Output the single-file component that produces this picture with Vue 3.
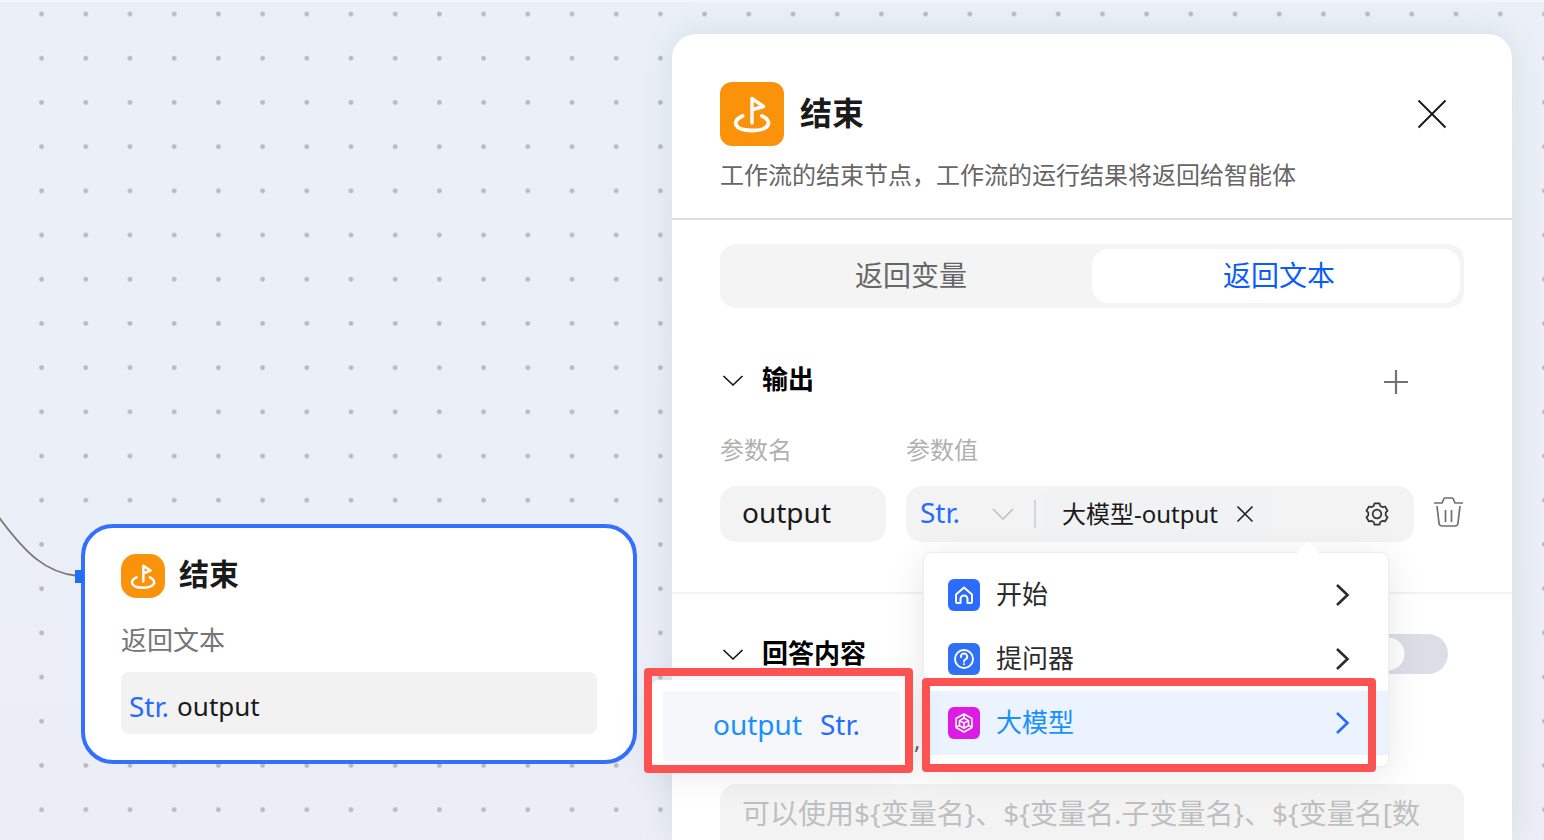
<script setup>
    import { ref } from 'vue'

    const activeTab = ref('text')
    const paramName = ref('output')
    const answer = ref('')
    const stream = ref(false)

    const tabs = [
        { key: 'variable', label: '返回变量' },
        { key: 'text', label: '返回文本' }
    ]

    const sources = [
        { key: 'start', label: '开始' },
        { key: 'question', label: '提问器' },
        { key: 'llm', label: '大模型' }
    ]
    const activeSource = ref('llm')

    // Outline of a gear with six teeth around 0,0
    function gearPath() {
        const points = []
        const profile = [[-30, 8.6], [-20, 9], [-13, 11], [13, 11], [20, 9]]
        for (let tooth = 0; tooth < 6; tooth++) {
            profile.forEach(([offset, radius]) => {
                const angle = (tooth * 60 - 90 + offset) * Math.PI / 180
                points.push(`${(radius * Math.cos(angle)).toFixed(2)} ${(radius * Math.sin(angle)).toFixed(2)}`)
            })
        }
        return `M${points.join('L')}Z`
    }
</script>

<template>
    <div class="canvas">
        <svg class="grid" aria-hidden="true">
            <defs>
                <pattern id="dots" x="19.5" y="-8" width="44.2" height="44.2" patternUnits="userSpaceOnUse">
                    <circle cx="22.1" cy="22.1" r="2.4" fill="#bababa" />
                </pattern>
            </defs>
            <rect width="100%" height="100%" fill="url(#dots)" />
            <path d="M-2 516C26 554 46 573 78 576" fill="none" stroke="#777" stroke-width="1.8" />
        </svg>

        <article class="node">
            <span class="port"></span>
            <header class="node-head">
                <svg class="node-icon" viewBox="0 0 64 64" aria-hidden="true">
                    <rect width="64" height="64" rx="22" fill="#fa930a" />
                    <g fill="none" stroke="#fff" stroke-width="3.6" stroke-linecap="round" stroke-linejoin="round">
                        <path d="M32.500 40V17L43 24L33 28" />
                        <path d="M22.500 34C10 40 16 49 32 49S54 40 42 34" />
                    </g>
                </svg>
                <h2>结束</h2>
            </header>
            <p class="node-label">返回文本</p>
            <div class="node-output"><span class="type">Str.</span> <span>output</span></div>
        </article>

        <aside class="panel">
            <header class="panel-head">
                <div class="title-row">
                    <svg class="panel-icon" viewBox="0 0 64 64" aria-hidden="true">
                        <rect width="64" height="64" rx="12" fill="#fa930a" />
                        <g fill="none" stroke="#fff" stroke-width="3.4" stroke-linecap="round" stroke-linejoin="round">
                            <path d="M32 41V16.500L43.500 24.500L33 27.500" />
                            <path d="M22.500 34C11 39 14 48.500 32 48.500S53 39 42 34" stroke-width="3.8" />
                        </g>
                    </svg>
                    <h1>结束</h1>
                    <button class="icon-button close" type="button" aria-label="关闭">
                        <svg width="32" height="32" viewBox="0 0 32 32" fill="none" stroke="#1a1a1a" stroke-width="1.9">
                            <path d="M2.500 2.500L29.500 29.500M29.500 2.500L2.500 29.500" />
                        </svg>
                    </button>
                </div>
                <p class="description">工作流的结束节点，工作流的运行结果将返回给智能体</p>
            </header>

            <div class="tabs" role="tablist">
                <button
                    v-for="tab in tabs"
                    :key="tab.key"
                    class="tab"
                    :class="{ active: activeTab === tab.key }"
                    type="button"
                    role="tab"
                    :aria-selected="activeTab === tab.key"
                    @click="activeTab = tab.key"
                >{{ tab.label }}</button>
            </div>

            <section class="output">
                <div class="section-head">
                    <svg class="fold" viewBox="0 0 26 26" fill="none" stroke="#111" stroke-width="1.6">
                        <path d="M3.500 9L13 18L22.500 9" />
                    </svg>
                    <h3>输出</h3>
                    <button class="icon-button add" type="button" aria-label="添加">
                        <svg width="24" height="24" viewBox="0 0 24 24" fill="none" stroke="#737373" stroke-width="2.2">
                            <path d="M12 0V24M0 12H24" />
                        </svg>
                    </button>
                </div>

                <div class="params">
                    <label class="caption" for="param-name">参数名</label>
                    <span class="caption">参数值</span>
                    <span></span>

                    <input id="param-name" v-model="paramName" class="name-input" type="text">

                    <div class="value-field">
                        <button class="type-select" type="button">
                            <span class="type">Str.</span>
                            <svg width="22" height="24" viewBox="0 0 22 24" fill="none" stroke="#bfc1c5" stroke-width="1.6">
                                <path d="M1 7L11 17L21 7" />
                            </svg>
                        </button>
                        <span class="tag">
                            <span>大模型-output</span>
                            <button class="icon-button" type="button" aria-label="移除">
                                <svg width="18" height="18" viewBox="0 0 18 18" fill="none" stroke="#222" stroke-width="1.6">
                                    <path d="M1.500 1.500L16.500 16.500M16.500 1.500L1.500 16.500" />
                                </svg>
                            </button>
                        </span>
                        <button class="icon-button gear" type="button" aria-label="设置">
                            <svg width="26" height="26" viewBox="-13 -13 26 26" fill="none" stroke="#333" stroke-width="1.7" stroke-linejoin="round">
                                <path :d="gearPath()" />
                                <circle r="4.3" />
                            </svg>
                        </button>

                        <div class="menu">
                            <ul>
                                <li v-for="source in sources" :key="source.key">
                                    <button
                                        class="menu-item"
                                        :class="{ active: activeSource === source.key }"
                                        type="button"
                                        @click="activeSource = source.key"
                                    >
                                        <svg v-if="source.key === 'start'" class="source-icon" viewBox="0 0 32 32">
                                            <rect width="32" height="32" rx="6" fill="#2b6bff" />
                                            <path d="M12.500 24H9.500Q8 24 8 22.500V15.500L16 8.500L24 15.500V22.500Q24 24 22.500 24H19.500V20A3.500 3.500 0 0 0 12.500 20Z" fill="none" stroke="#fff" stroke-width="2" stroke-linejoin="round" />
                                        </svg>
                                        <svg v-else-if="source.key === 'question'" class="source-icon" viewBox="0 0 32 32">
                                            <rect width="32" height="32" rx="6" fill="#2f70f5" />
                                            <g fill="none" stroke="#fff" stroke-width="1.9" stroke-linecap="round">
                                                <circle cx="16" cy="16" r="9" />
                                                <path d="M13 14A3.100 3.100 0 1 1 17.500 16.400Q16 17.200 16 18.500" />
                                                <path d="M16 21V21.200" />
                                            </g>
                                        </svg>
                                        <svg v-else class="source-icon" viewBox="0 0 32 32">
                                            <rect width="32" height="32" rx="6" fill="#dc1ce6" />
                                            <g fill="none" stroke="#fff" stroke-width="1.6" stroke-linejoin="round">
                                                <path d="M16 7L24 11.500V20.500L16 25L8 20.500V11.500Z" />
                                                <path d="M16 11L20.500 13.600V18.600L16 21.200L11.500 18.600V13.600Z" />
                                                <path d="M11.500 13.600L16 16L20.500 13.600M16 16V21M8.500 20L11.500 18.500M20.500 18.500L23.500 20M16 7.500V11" />
                                            </g>
                                        </svg>
                                        <span>{{ source.label }}</span>
                                        <svg class="arrow" viewBox="0 0 14 22" fill="none" stroke="currentColor" stroke-width="2.6">
                                            <path d="M1 1L11.500 11L1 21" />
                                        </svg>
                                    </button>
                                </li>
                            </ul>

                            <div class="submenu">
                                <button class="submenu-item" type="button">
                                    <span>output</span>
                                    <span class="type">Str.</span>
                                </button>
                            </div>

                            <span class="frame frame-source"></span>
                            <span class="frame frame-output"></span>
                        </div>
                    </div>

                    <button class="icon-button remove" type="button" aria-label="删除">
                        <svg width="30" height="32" viewBox="0 0 30 32" fill="none" stroke="#707070" stroke-width="1.7" stroke-linejoin="round">
                            <path d="M0 7H8L10 2.500Q10.300 2 11 2H18Q18.700 2 19 2.500L21 7H29" />
                            <path d="M3 10L5 27Q5.300 30 8 30H21Q23.700 30 24 27L26 10" />
                            <path d="M11.500 14V26M17.500 14V26" />
                        </svg>
                    </button>
                </div>
            </section>

            <section class="answer">
                <div class="section-head">
                    <svg class="fold" viewBox="0 0 26 26" fill="none" stroke="#111" stroke-width="1.6">
                        <path d="M3.500 9L13 18L22.500 9" />
                    </svg>
                    <h3>回答内容</h3>
                    <input v-model="stream" class="switch" type="checkbox" role="switch" aria-label="流式输出">
                </div>
                <p class="hint">,</p>
                <textarea v-model="answer" aria-label="回答内容" placeholder="可以使用${变量名}、${变量名.子变量名}、${变量名[数"></textarea>
            </section>
        </aside>
    </div>
</template>

<style>
    body {
        margin: 0;
    }
</style>

<style scoped>
    * {
        box-sizing: border-box;
    }

    .canvas {
        position: relative;
        display: flex;
        justify-content: flex-end;
        height: 100vh;
        padding: 32px 32px 0;
        overflow: hidden;
        border-top: 2px solid #f2f6ff;
        background: linear-gradient(#ebf0f7, #ebeef7);
        color: #1a1a1a;
        font-family: "Noto Sans", "Noto Sans CJK SC", sans-serif;
        font-size: 26px;
    }

    h1, h2, h3, p, ul {
        margin: 0;
        padding: 0;
    }

    ul {
        list-style: none;
    }

    button, input, textarea {
        margin: 0;
        padding: 0;
        border: 0;
        background: none;
        color: inherit;
        font: inherit;
    }

    svg {
        display: block;
        flex: none;
    }

    .grid {
        position: absolute;
        top: -2px;
        left: 0;
        width: 100%;
        height: 100vh;
    }

    .icon-button {
        display: flex;
        align-items: center;
        justify-content: center;
    }

    .type {
        color: #246bff;
        font-size: 28px;
    }

    .node {
        position: absolute;
        top: 522px;
        left: 81px;
        width: 556px;
        height: 240px;
        padding: 26px 36px;
        border: 4px solid #3370ff;
        border-radius: 32px;
        background: #fff;
    }

    .port {
        position: absolute;
        top: 42px;
        left: -10px;
        width: 8px;
        height: 13px;
        background: #1f6ff5;
    }

    .node-head {
        display: flex;
        align-items: center;
        gap: 14px;
    }

    .node-icon {
        width: 44px;
        height: 44px;
    }

    .node-head h2 {
        padding-bottom: 4px;
        font-size: 30px;
        line-height: 40px;
    }

    .node-label {
        margin-top: 22px;
        color: #757575;
        line-height: 40px;
    }

    .node-output {
        display: flex;
        align-items: center;
        gap: 8px;
        height: 62px;
        margin-top: 12px;
        padding: 6px 8px 0;
        border-radius: 8px;
        background: #f2f2f2;
    }

    .panel {
        position: relative;
        flex: 0 1 840px;
        border-radius: 24px 24px 0 0;
        background: #fff;
        box-shadow: 0 0 32px rgba(90, 110, 110, 0.14);
    }

    .panel-head {
        padding: 48px 48px 24px;
        border-bottom: 2px solid #dedede;
    }

    .title-row {
        display: flex;
        align-items: center;
        gap: 16px;
    }

    .panel-icon {
        width: 64px;
        height: 64px;
    }

    .title-row h1 {
        flex: 1;
        padding-bottom: 2px;
        font-size: 32px;
        line-height: 44px;
    }

    .close {
        margin-right: 16px;
    }

    .description {
        margin-top: 12px;
        padding-bottom: 2px;
        color: #666;
        font-size: 24px;
        line-height: 34px;
    }

    .tabs {
        display: flex;
        height: 64px;
        margin: 24px 48px 0;
        padding: 5px 4px;
        border-radius: 16px;
        background: #f4f4f4;
    }

    .tab {
        flex: 1;
        padding: 0 0 4px 6px;
        border-radius: 16px;
        color: #666;
        font-size: 28px;
    }

    .tab.active {
        background: #fff;
        color: #0a5cff;
    }

    .output {
        padding: 52px 48px 50px;
        border-bottom: 2px solid #f2f2f2;
    }

    .section-head {
        display: flex;
        align-items: center;
        height: 40px;
        gap: 16px;
    }

    .fold {
        width: 26px;
        height: 26px;
    }

    .section-head h3 {
        flex: 1;
        padding-bottom: 2px;
        color: #000;
        font-size: 26px;
        line-height: 40px;
    }

    .add {
        margin-right: 56px;
        padding-top: 4px;
    }

    .params {
        display: grid;
        grid-template-columns: 166px 1fr 30px;
        column-gap: 20px;
        align-items: center;
        margin-top: 28px;
    }

    .caption {
        padding: 2px 0 16px;
        color: #b0b0b0;
        font-size: 24px;
        line-height: 40px;
    }

    .name-input {
        width: 100%;
        height: 56px;
        padding: 0 22px 4px;
        border-radius: 16px;
        background: #f3f3f3;
        font-size: 28px;
    }

    .value-field {
        position: relative;
        display: flex;
        align-items: center;
        height: 56px;
        padding: 0 24px 0 14px;
        border-radius: 16px;
        background: #f3f3f3;
    }

    .type-select {
        display: flex;
        align-items: center;
        justify-content: space-between;
        width: 116px;
        height: 28px;
        padding-right: 20px;
        border-right: 2px solid #d0d4dd;
    }

    .type-select .type,
    .tag span {
        padding-bottom: 4px;
    }

    .tag {
        display: flex;
        align-items: center;
        gap: 18px;
        height: 44px;
        margin-left: 6px;
        padding: 0 18px 0 20px;
        border-radius: 8px;
        background: #f1f2f4;
        font-size: 24px;
    }

    .gear {
        margin-left: auto;
    }

    .remove {
        padding-bottom: 4px;
    }

    .menu {
        position: absolute;
        z-index: 2;
        top: 66px;
        left: 17px;
        width: 466px;
        padding: 10px 0 11px;
        border: 1px solid #eee;
        border-radius: 8px;
        background: #fff;
        box-shadow: 0 6px 36px rgba(0, 0, 0, 0.1);
    }

    .menu::before {
        position: absolute;
        top: -8px;
        right: 72px;
        width: 16px;
        height: 16px;
        background: #fff;
        content: "";
        transform: rotate(45deg);
    }

    .menu ul {
        position: relative;
    }

    .menu-item {
        display: flex;
        align-items: center;
        gap: 16px;
        width: 100%;
        height: 64px;
        padding: 0 38px 0 24px;
        color: #2b2b2b;
        text-align: left;
    }

    .menu-item span {
        flex: 1;
        padding-bottom: 4px;
    }

    .menu-item.active {
        background: #ebf3ff;
        color: #1a90ff;
    }

    .menu-item.active .arrow {
        color: #246bff;
    }

    .source-icon {
        width: 32px;
        height: 32px;
    }

    .arrow {
        width: 14px;
        height: 22px;
    }

    .submenu {
        position: absolute;
        top: 127px;
        right: 476px;
        width: 261px;
        padding: 11px 12px 6px;
        border-radius: 8px;
        background: #fff;
        box-shadow: 0 6px 36px rgba(0, 0, 0, 0.1);
    }

    .submenu-item {
        display: flex;
        align-items: center;
        gap: 18px;
        width: 100%;
        height: 70px;
        padding: 0 50px 4px;
        background: #f5f7fb;
        color: #1a90ff;
        font-size: 28px;
    }

    .frame {
        position: absolute;
        border: 8px solid #fc5252;
        border-radius: 4px;
    }

    .frame-source {
        top: 125px;
        left: -2px;
        width: 454px;
        height: 94px;
    }

    .frame-output {
        top: 115px;
        right: 475px;
        width: 269px;
        height: 105px;
    }

    .answer {
        padding: 40px 48px 0;
    }

    .switch {
        width: 80px;
        height: 40px;
        margin-right: 16px;
        border-radius: 20px;
        appearance: none;
        background: radial-gradient(circle at 20px 20px, #fff 16px, transparent 17px) #dbdee7;
    }

    .switch:checked {
        background: radial-gradient(circle at 60px 20px, #fff 16px, transparent 17px) #246bff;
    }

    .hint {
        height: 36px;
        margin-top: 48px;
        padding-left: 194px;
        color: #666;
        font-size: 24px;
        line-height: 36px;
    }

    textarea {
        display: block;
        width: 100%;
        height: 160px;
        margin-top: 26px;
        padding: 9px 20px 9px 22px;
        border-radius: 16px;
        background: #f3f3f3;
        font-size: 28px;
        line-height: 40px;
        resize: none;
    }

    textarea::placeholder {
        color: #bfbfbf;
        opacity: 1;
    }
</style>
